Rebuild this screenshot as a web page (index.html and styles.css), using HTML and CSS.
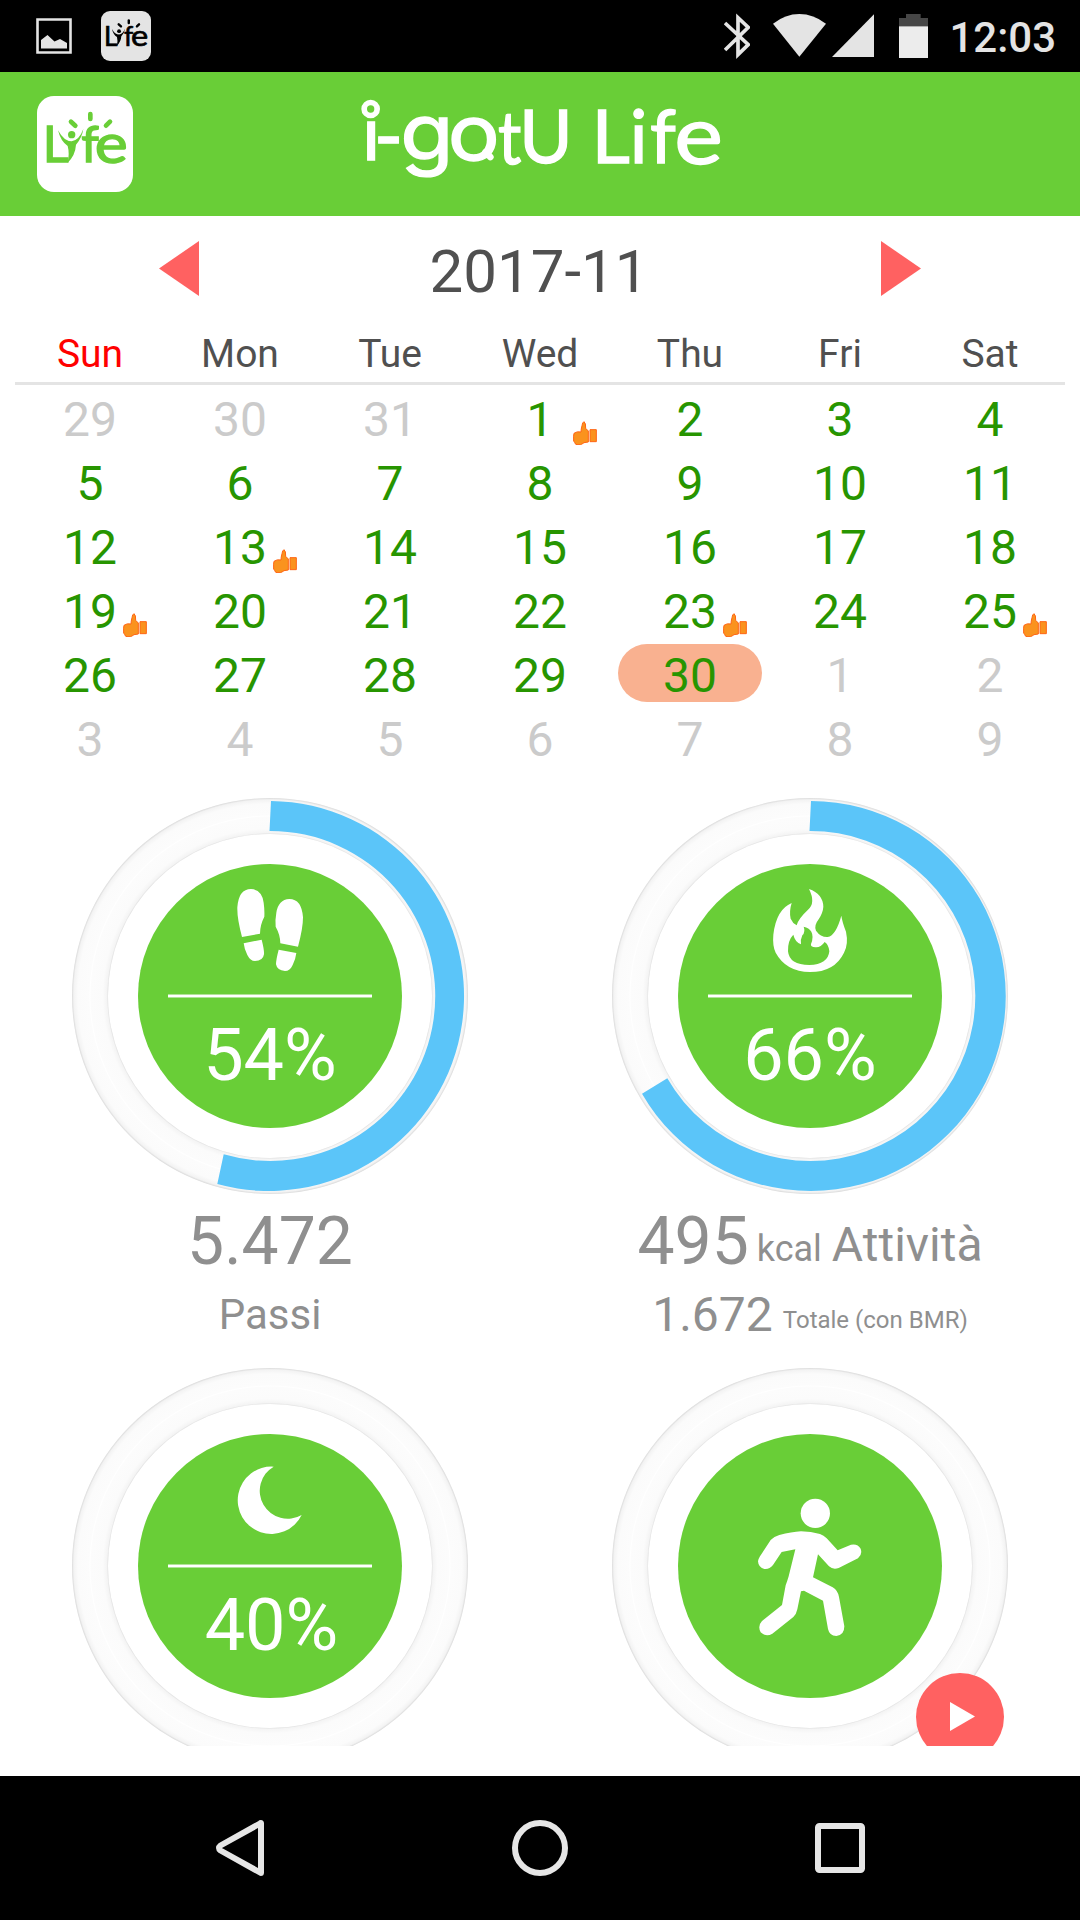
FILE: index.html
```html
<!DOCTYPE html>
<html lang="it">
<head>
    <meta charset="UTF-8">
    <meta name="viewport" content="width=device-width, initial-scale=1.0">
    <title>i-gotU Life</title>
    <link rel="stylesheet" href="styles.css">
</head>
<body>
    <!-- Shared shapes -->
    <svg class="defs" width="0" height="0">
        <defs>
            <radialGradient id="track" gradientUnits="userSpaceOnUse" cx="200" cy="200" r="198">
                <stop offset="0.817" stop-color="#e0e0e0"/>
                <stop offset="0.824" stop-color="#f4f4f4"/>
                <stop offset="0.845" stop-color="#fbfbfb"/>
                <stop offset="0.904" stop-color="#fcfcfc"/>
                <stop offset="0.909" stop-color="#ffffff"/>
                <stop offset="0.914" stop-color="#fcfcfc"/>
                <stop offset="0.97" stop-color="#fbfbfb"/>
                <stop offset="0.991" stop-color="#f3f3f3"/>
                <stop offset="1" stop-color="#dadada"/>
            </radialGradient>
            <symbol id="life-mark" viewBox="111 288 288 288">
                <g fill="currentColor" stroke="currentColor" stroke-width="4" font-family="Lato, sans-serif">
                    <text font-size="151"><tspan x="128" y="487">L</tspan><tspan x="244" y="487">f</tspan><tspan x="284" y="488" font-size="164" textLength="99" lengthAdjust="spacingAndGlyphs">e</tspan></text>
                </g>
                <g fill="currentColor">
                    <circle cx="215" cy="404" r="11"/>
                    <path d="M174 391Q192 424 215 424Q238 420 250 387Q246 414 228 434Q226 466 203 488Q209 460 203 438Q182 424 174 391z"/>
                </g>
                <g stroke="currentColor" stroke-width="14" stroke-linecap="round">
                    <path d="M271 342v15M213 365l13 12M330 365l-12 12"/>
                </g>
            </symbol>
            <symbol id="thumb" viewBox="0 0 72 72">
                <g fill="#fa931e" stroke="#ff6414" stroke-width="3">
                    <path d="M33 2Q28 4 27 14Q24 25 24 33Q12 30 3 37Q1 42 2 61L6 65Q5 70 12 71H22Q28 69 33 65L46 63V30L38 22Q39 6 33 2z"/>
                    <path d="M51 26h19v36H51z"/>
                </g>
            </symbol>
        </defs>
    </svg>

    <div class="status-bar">
        <svg class="icon-image" viewBox="0 0 36 36">
            <path d="M1.5 1.5h33v33h-33z" fill="none" stroke="#e4e4e4" stroke-width="2.6"/>
            <path d="M5 30.5V22l6.500-5 7 6.500 5.500-2.500 7 4v5.500z" fill="#e4e4e4"/>
        </svg>
        <svg class="icon-life"><use href="#life-mark"/></svg>
        <div class="status-right">
            <svg class="icon-bt" viewBox="72 0 78 216">
                <path d="M75 69L145 134L114 164V53L145 82L75 150" fill="none" stroke="#e4e4e4" stroke-width="11"/>
            </svg>
            <svg class="icon-wifi" viewBox="219 0 159 216">
                <path d="M298 170L219 71Q256 42 298 42T378 71z" fill="#e4e4e4"/>
            </svg>
            <svg class="icon-signal" viewBox="396 0 126 216">
                <path d="M396 171L522 43V171z" fill="#e4e4e4"/>
            </svg>
            <svg class="icon-battery" viewBox="597 0 87 216">
                <path d="M597 80V54h21V42h44v12h22v26z" fill="#464646"/>
                <path d="M597 79h87v95h-87z" fill="#ececec"/>
            </svg>
            <span class="clock">12:03</span>
        </div>
    </div>

    <header class="app-bar">
        <svg class="app-icon"><use href="#life-mark"/></svg>
        <svg class="app-title" viewBox="0 36 1200 432">
            <text fill="#fff" stroke="#fff" stroke-width="4" font-family="Lato, sans-serif"><tspan x="66" y="300" font-size="228">i</tspan><tspan x="112" y="314" font-size="246" font-family="Roboto">-</tspan><tspan x="181" y="300" font-size="232" font-family="Inter" textLength="160" lengthAdjust="spacingAndGlyphs">g</tspan><tspan x="323" y="299" font-size="229" font-family="Inter" textLength="156" lengthAdjust="spacingAndGlyphs">o</tspan><tspan x="474" y="311" font-size="218" textLength="70" lengthAdjust="spacingAndGlyphs">t</tspan><tspan x="538" y="310" font-size="222" textLength="160" lengthAdjust="spacingAndGlyphs">U</tspan> <tspan x="755" y="310" font-size="222">L</tspan><tspan x="869" y="310" font-size="222">i</tspan><tspan x="930" y="310" font-size="222">f</tspan><tspan x="1003" y="313" font-size="245" textLength="146" lengthAdjust="spacingAndGlyphs">e</tspan></text>
            <circle class="i-ring" cx="92" cy="147" r="19.5"/>
            <path d="M437 276L451 291" stroke="#fff" stroke-width="20" stroke-linecap="round"/>
        </svg>
    </header>

    <section class="calendar">
        <div class="month">
            <svg class="arrow" viewBox="0 0 40 55"><path d="M40 0v55L0 27.500z"/></svg>
            <span>2017-11</span>
            <svg class="arrow" viewBox="0 0 40 55"><path d="M0 0v55L40 27.500z"/></svg>
        </div>
        <div class="weekdays">
            <span class="sunday">Sun</span><span>Mon</span><span>Tue</span><span>Wed</span><span>Thu</span><span>Fri</span><span>Sat</span>
        </div>
        <div class="days">
            <div class="day other">29</div>
            <div class="day other">30</div>
            <div class="day other">31</div>
            <div class="day">1<svg class="thumb"><use href="#thumb"/></svg></div>
            <div class="day">2</div>
            <div class="day">3</div>
            <div class="day">4</div>

            <div class="day">5</div>
            <div class="day">6</div>
            <div class="day">7</div>
            <div class="day">8</div>
            <div class="day">9</div>
            <div class="day">10</div>
            <div class="day">11</div>

            <div class="day">12</div>
            <div class="day">13<svg class="thumb"><use href="#thumb"/></svg></div>
            <div class="day">14</div>
            <div class="day">15</div>
            <div class="day">16</div>
            <div class="day">17</div>
            <div class="day">18</div>

            <div class="day">19<svg class="thumb"><use href="#thumb"/></svg></div>
            <div class="day">20</div>
            <div class="day">21</div>
            <div class="day">22</div>
            <div class="day">23<svg class="thumb"><use href="#thumb"/></svg></div>
            <div class="day">24</div>
            <div class="day">25<svg class="thumb"><use href="#thumb"/></svg></div>

            <div class="day">26</div>
            <div class="day">27</div>
            <div class="day">28</div>
            <div class="day">29</div>
            <div class="day selected">30</div>
            <div class="day other">1</div>
            <div class="day other">2</div>

            <div class="day other">3</div>
            <div class="day other">4</div>
            <div class="day other">5</div>
            <div class="day other">6</div>
            <div class="day other">7</div>
            <div class="day other">8</div>
            <div class="day other">9</div>
        </div>
    </section>

    <main class="stats">
        <!-- Steps -->
        <div class="stat">
            <div class="gauge">
                <svg class="ring" viewBox="0 0 400 400">
                    <circle cx="200" cy="200" r="198" fill="url(#track)"/>
                    <circle cx="200" cy="200" r="162" fill="#fff"/>
                    <path class="progress" d="M201 5A195 195 0 1 1 147.300 388L153.700 358.300A165 165 0 1 0 199.500 35z"/>
                </svg>
                <div class="disc">
                    <svg class="disc-icon" viewBox="234 222 792 390">
                        <path d="M546 441Q531 385 532 352Q536 297 573 297Q606 299 611 338Q614 360 613 380Q600 405 600 431z"/>
                        <path d="M551 460L605 449Q613 480 612 493Q609 513 585 513Q571 513 562 495Q553 478 551 460z"/>
                        <path d="M714 470Q729 415 729 382Q725 327 688 327Q655 329 649 368Q645 390 647 410Q661 435 661 460z"/>
                        <path d="M709 489L656 479Q648 509 648 523Q651 541 675 543Q690 543 698 525Q707 507 709 489z"/>
                    </svg>
                    <div class="divider"></div>
                    <div class="percent">54%</div>
                </div>
            </div>
            <div class="value">5.472</div>
            <div class="label">Passi</div>
        </div>

        <!-- Calories -->
        <div class="stat">
            <div class="gauge">
                <svg class="ring" viewBox="0 0 400 400">
                    <circle cx="200" cy="200" r="198" fill="url(#track)"/>
                    <circle cx="200" cy="200" r="162" fill="#fff"/>
                    <path class="progress" d="M201 5A195 195 0 1 1 32 297.700L57.300 282.300A165 165 0 1 0 199.500 35z"/>
                </svg>
                <div class="disc">
                    <svg class="disc-icon" viewBox="234 222 792 390">
                        <path fill-rule="evenodd" d="M627 297Q669 312 670 350Q669 368 656 388Q641 407 648 422Q662 442 683 441Q708 436 724 377Q727 397 738 425Q746 462 732 488Q704 546 630 546Q558 545 527 488Q517 467 520 434Q529 358 575 339Q567 364 572 386Q578 400 590 406Q594 387 624 359Q648 339 627 297zM611 410Q617 425 607 436Q601 448 603 463Q585 456 580 434Q563 451 564 484Q568 525 628 525Q684 524 688 484Q686 463 674 456Q662 473 647 472Q630 471 633 462Q642 440 634 425Q627 413 611 410z"/>
                    </svg>
                    <div class="divider"></div>
                    <div class="percent">66%</div>
                </div>
            </div>
            <div class="value">495<span class="kcal">kcal</span><span class="activity">Attività</span></div>
            <div class="total">1.672<span class="note">Totale (con BMR)</span></div>
        </div>

        <!-- Sleep -->
        <div class="stat">
            <div class="gauge">
                <svg class="ring" viewBox="0 0 400 400">
                    <circle cx="200" cy="200" r="198" fill="url(#track)"/>
                    <circle cx="200" cy="200" r="162" fill="#fff"/>
                </svg>
                <div class="disc">
                    <svg class="disc-icon" viewBox="234 252 792 390">
                        <path d="M641 350A101 101 0 1 0 725 495A83 83 0 0 1 641 350z"/>
                    </svg>
                    <div class="divider"></div>
                    <div class="percent sleep">40%</div>
                </div>
            </div>
        </div>

        <!-- Exercise -->
        <div class="stat">
            <div class="gauge">
                <svg class="ring" viewBox="0 0 400 400">
                    <circle cx="200" cy="200" r="198" fill="url(#track)"/>
                    <circle cx="200" cy="200" r="162" fill="#fff"/>
                </svg>
                <div class="disc">
                    <svg class="runner" viewBox="234 252 792 792">
                        <circle cx="646" cy="490" r="44"/>
                        <path d="M586 598L545 606L519 645Q508 659 493 657Q475 652 474 634Q475 627 480 619L512 570Q521 560 538 555Q575 546 603 544Q633 545 660 552Q671 556 680 565L713 601L753 584Q773 580 782 596Q788 613 774 625L716 654Q699 660 687 649L654 613L639 682L698 712Q714 722 717 741L733 829Q733 856 709 858Q688 857 684 837L669 752L612 722L603 724L592 778Q589 793 580 801L517 851Q498 862 482 847Q472 828 486 813L546 765L557 706Q562 693 566 679z"/>
                    </svg>
                </div>
                <div class="play">
                    <svg viewBox="0 0 25 29"><path d="M0 0L25 14.500L0 29z" fill="#fff"/></svg>
                </div>
            </div>
        </div>
    </main>

    <nav class="nav-bar">
        <svg viewBox="0 0 60 60"><path d="M51 5.500V54.500Q51 55.500 50 54.500L10.500 32.500Q7.500 30 10.500 27.500L50 5.500Q51 4.500 51 5.500z"/></svg>
        <svg viewBox="0 0 60 60"><circle cx="30" cy="30" r="25"/></svg>
        <svg viewBox="0 0 60 60"><rect x="8" y="8" width="44" height="44" rx="1.500"/></svg>
    </nav>
</body>
</html>
```
FILE: styles.css
```css
* {
    margin: 0;
    padding: 0;
    box-sizing: border-box;
}

body {
    width: 1080px;
    height: 1920px;
    display: flex;
    flex-direction: column;
    font-family: Roboto, sans-serif;
    background: #fff;
    overflow: hidden;
}

svg {
    display: block;
    flex-shrink: 0;
}

.defs {
    position: absolute;
}

/* Status bar */
.status-bar {
    height: 72px;
    display: flex;
    align-items: center;
    padding: 0 24px 0 36px;
    background: #000;
}

.icon-image {
    width: 36px;
    height: 36px;
}

.icon-life {
    width: 50px;
    height: 50px;
    margin-left: 29px;
    border-radius: 9px;
    background: #e4e4e4;
    color: #000;
}

.status-right {
    display: flex;
    align-items: center;
    margin-left: auto;
}

.status-right svg {
    height: 72px;
}

.icon-bt {
    width: 26px;
    margin-right: 23px;
}

.icon-wifi {
    width: 53px;
    margin-right: 6px;
}

.icon-signal {
    width: 42px;
    margin-right: 25px;
}

.icon-battery {
    width: 29px;
}

.clock {
    width: 128px;
    padding-top: 3px;
    text-align: right;
    font-size: 42px;
    font-weight: 500;
    line-height: 72px;
    color: #e4e4e4;
}

/* App bar */
.app-bar {
    height: 144px;
    display: flex;
    align-items: center;
    padding-left: 37px;
    background: #69ce37;
}

.app-icon {
    width: 96px;
    height: 96px;
    border-radius: 17px;
    background: #fff;
    color: #69ce37;
}

.app-title {
    width: 400px;
    height: 144px;
    margin-left: 207px;
}

.i-ring {
    fill: #69ce37;
    stroke: #fff;
    stroke-width: 17px;
}

/* Calendar */
.calendar {
    padding: 0 15px;
}

.month {
    height: 111px;
    display: flex;
    justify-content: space-between;
    padding: 0 144px;
    font-size: 60px;
    line-height: 111px;
    color: #505050;
}

.month span {
    margin-left: -2px;
}

.arrow {
    width: 40px;
    height: 55px;
    margin-top: 25px;
    fill: #ff6161;
}

.weekdays {
    height: 58px;
    display: grid;
    grid-template-columns: repeat(7, 1fr);
    border-bottom: 3px solid #e4e4e4;
    font-size: 39px;
    line-height: 54px;
    text-align: center;
    color: #505050;
}

.sunday {
    color: #f00;
}

.days {
    display: grid;
    grid-template-columns: repeat(7, 1fr);
    grid-auto-rows: 64px;
}

.day {
    position: relative;
    font-size: 48px;
    line-height: 69px;
    text-align: center;
    color: #279500;
}

.day.other {
    color: #cbcbcb;
}

.day.selected {
    height: 58px;
    margin: 3px 3px 0;
    line-height: 63px;
    border-radius: 29px;
    background: #f9b190;
}

.thumb {
    position: absolute;
    left: 108px;
    top: 36px;
    width: 24px;
    height: 24px;
}

/* Gauges */
.stats {
    height: 977px;
    padding-top: 27px;
    display: grid;
    grid-template-columns: 540px 540px;
    grid-auto-rows: 570px;
    overflow: hidden;
    color: #8f8f8f;
    text-align: center;
}

.gauge {
    position: relative;
    width: 400px;
    height: 400px;
    margin: 0 auto;
    display: grid;
    place-items: center;
}

.ring,
.disc {
    grid-area: 1 / 1;
}

.ring {
    width: 400px;
    height: 400px;
}

.progress {
    fill: #5bc5f9;
}

.disc {
    width: 264px;
    height: 264px;
    border-radius: 50%;
    background: #69ce37;
    color: #fff;
    fill: #fff;
}

.disc-icon {
    width: 264px;
    height: 130px;
}

.divider {
    width: 204px;
    height: 4px;
    margin: 0 auto;
    background: #fff;
    border: solid #b0e498;
    border-width: 1px 0;
}

.percent {
    font-size: 72px;
    line-height: 115px;
}

.percent.sleep {
    padding-left: 3px;
}

.runner {
    width: 264px;
    height: 264px;
}

.value {
    height: 91px;
    font-size: 66px;
    line-height: 91px;
}

.label {
    font-size: 42px;
    line-height: 55px;
}

.total {
    height: 55px;
    font-size: 48px;
    line-height: 55px;
}

.kcal,
.activity,
.note {
    line-height: 1;
    vertical-align: 3px;
}

.kcal {
    margin-left: 8px;
    font-size: 36px;
}

.activity {
    margin-left: 10px;
    font-size: 48px;
}

.note {
    margin-left: 10px;
    font-size: 24px;
}

.play {
    position: absolute;
    left: 306px;
    top: 307px;
    width: 88px;
    height: 88px;
    display: flex;
    align-items: center;
    justify-content: center;
    padding: 0 0 2px 5px;
    border-radius: 50%;
    background: #ff6161;
}

.play svg {
    width: 25px;
    height: 29px;
}

/* Navigation bar */
.nav-bar {
    height: 144px;
    margin-top: 30px;
    display: flex;
    align-items: center;
    justify-content: center;
    gap: 240px;
    background: #000;
}

.nav-bar svg {
    width: 60px;
    height: 60px;
    fill: none;
    stroke: #e6e6e6;
    stroke-width: 6px;
    stroke-linejoin: round;
}
```
